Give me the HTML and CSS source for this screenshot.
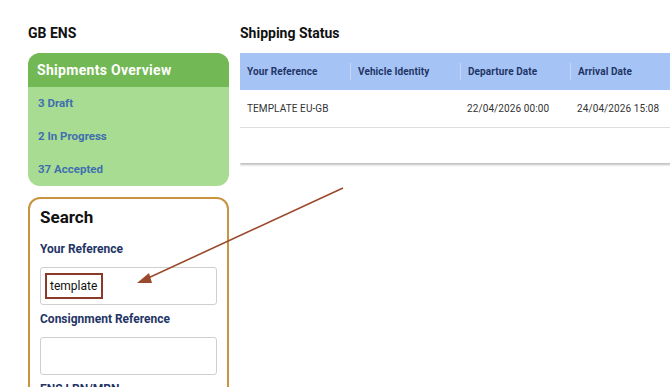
FILE: index.html
```html
<!DOCTYPE html>
<html lang="en">
<head>
    <meta charset="UTF-8">
    <title>GB ENS</title>
    <link rel="stylesheet" href="styles.css">
</head>
<body>
    <div class="page">
        <div class="sidebar">
            <div class="title">GB ENS</div>

            <div class="overview">
                <div class="overview-head">Shipments Overview</div>
                <div class="overview-body">
                    <a class="overview-link">3 Draft</a>
                    <a class="overview-link">2 In Progress</a>
                    <a class="overview-link">37 Accepted</a>
                </div>
            </div>

            <div class="search">
                <div class="search-title">Search</div>
                <div class="field-label">Your Reference</div>
                <div class="field"><span class="marked">template</span></div>
                <div class="field-label">Consignment Reference</div>
                <div class="field"></div>
                <div class="field-label">ENS LRN/MRN</div>
            </div>
        </div>

        <div class="main">
            <div class="title">Shipping Status</div>

            <div class="status">
                <div class="status-row status-head">
                    <div class="cell">Your Reference</div>
                    <div class="cell">Vehicle Identity</div>
                    <div class="cell">Departure Date</div>
                    <div class="cell">Arrival Date</div>
                </div>
                <div class="status-row">
                    <div class="cell">TEMPLATE EU-GB</div>
                    <div class="cell"></div>
                    <div class="cell">22/04/2026 00:00</div>
                    <div class="cell">24/04/2026 15:08</div>
                </div>
                <div class="status-empty"></div>
            </div>
        </div>
    </div>

    <svg class="pointer" width="670" height="387" viewBox="0 0 670 387">
        <line x1="343" y1="188" x2="146" y2="279" stroke="#9a4a2c" stroke-width="1.6"/>
        <polygon points="137,283 149,273 152,283" fill="#9a4a2c"/>
    </svg>
</body>
</html>
```

FILE: styles.css
```css
body {
    margin: 0;
    background-color: white;
    font-family: Roboto, 'Liberation Sans', sans-serif;
    overflow: hidden;
}

.page {
    display: flex;
    gap: 11px;
    padding: 24px 0 0 28px;
    height: 363px;
    overflow: hidden;
}

.sidebar {
    width: 201px;
    flex-shrink: 0;
}

.main {
    flex: 1;
    overflow: hidden;
}

.title {
    font-size: 14px;
    font-weight: bold;
    line-height: 18px;
    color: #111;
    margin-bottom: 11px;
}

.overview {
    border-radius: 12px;
    overflow: hidden;
    background-color: #a9dc93;
}

.overview-head {
    background-color: #72b854;
    color: white;
    font-size: 14px;
    font-weight: bold;
    letter-spacing: 0.3px;
    height: 34px;
    line-height: 34px;
    padding-left: 9px;
}

.overview-body {
    padding: 0 0 0 10px;
}

.overview-link {
    display: block;
    color: #3f6fae;
    font-size: 11.5px;
    font-weight: bold;
    line-height: 33px;
}

.search {
    margin-top: 11px;
    border: 2px solid #c8943f;
    border-radius: 12px;
    padding: 8px 10px 0 10px;
    height: 220px;
}

.search-title {
    font-size: 17px;
    font-weight: bold;
    color: #111;
    line-height: 20px;
    margin-bottom: 14px;
}

.field-label {
    font-size: 12px;
    font-weight: bold;
    color: #1f3566;
    line-height: 16px;
    margin-bottom: 10px;
}

.field {
    height: 36px;
    border: 1px solid #cfcfcf;
    border-radius: 3px;
    margin-bottom: 6px;
    display: flex;
    align-items: center;
    padding-left: 4px;
}

.marked {
    border: 2px solid #8b3a28;
    font-size: 12px;
    color: #111;
    padding: 4px 4px 4px 3px;
    line-height: 14px;
}

.status {
    width: 460px;
    box-shadow: -1px 0 0 #e2e2e2, 0 2px 2px rgba(0, 0, 0, 0.25);
}

.status-row {
    display: flex;
    height: 37px;
    align-items: center;
    border-bottom: 1px solid #dedede;
}

.status-head {
    background-color: #a5c3f4;
    border-bottom: none;
}

.cell {
    width: 110px;
    padding-left: 7px;
    box-sizing: border-box;
    font-size: 10px;
    letter-spacing: 0.1px;
    color: #333;
}

.status-head .cell {
    font-weight: bold;
    color: #1f3566;
    border-left: 1px solid #c3d6f8;
    line-height: 17px;
}

.status-head .cell:first-child {
    border-left: none;
}

.status-empty {
    height: 35px;
}

.pointer {
    position: absolute;
    left: 0;
    top: 0;
    pointer-events: none;
}
```
